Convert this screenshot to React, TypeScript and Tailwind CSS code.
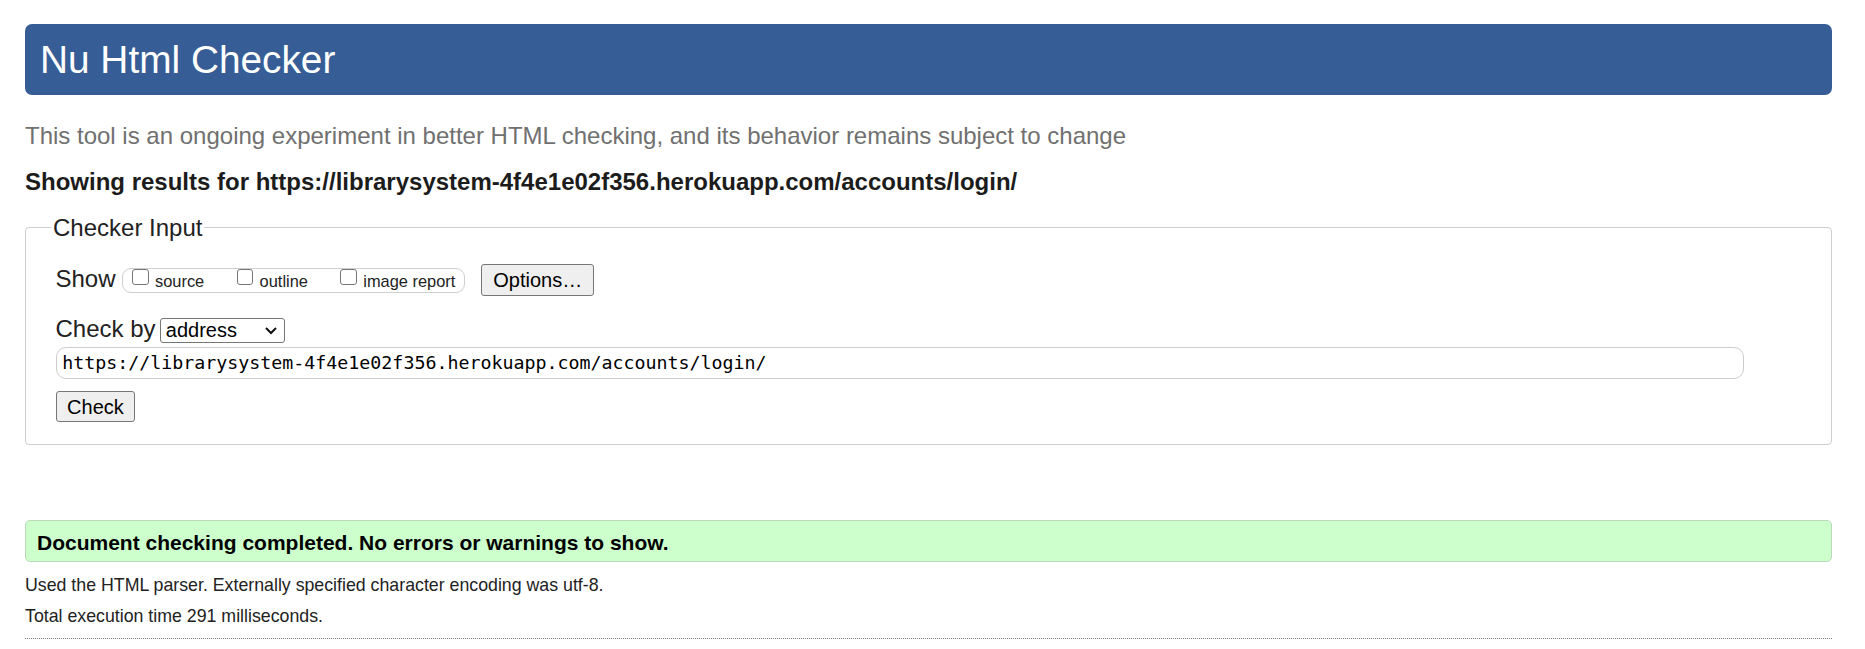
import { useState } from "react";

const targetUrl = "https://librarysystem-4f4e1e02f356.herokuapp.com/accounts/login/";

const showOptions = ["source", "outline", "image report"];

function Checkbox({ label }: { label: string }) {
  const [checked, setChecked] = useState(false);
  return (
    <label className="flex items-start">
      <input
        type="checkbox"
        checked={checked}
        onChange={() => setChecked(!checked)}
        className="appearance-none m-0 w-[16.7px] h-[16.7px] border border-[#767676] rounded-[3px] bg-white shrink-0"
      />
      <span className="ml-[6.2px] mt-[3.5px] text-[16.4px] leading-[19px] text-[#222]">{label}</span>
    </label>
  );
}

function NativeButton({ children }: { children: React.ReactNode }) {
  return (
    <button className="h-[32px] px-[11px] border border-[#767676] rounded-[3px] bg-[#efefef] text-[20px] leading-[22px] text-black">
      {children}
    </button>
  );
}

export default function App() {
  return (
    <div className="min-h-screen bg-white pt-[24px] pl-[25px] pr-[33px] text-[#222] font-['Liberation_Sans',Arial,sans-serif]">
      <h1 className="h-[71px] flex items-center pl-[15px] rounded-[7px] bg-[#365d95] text-white text-[38.8px] leading-[44px]">
        Nu Html Checker
      </h1>

      <p className="mt-[26.7px] text-[24px] leading-[28px] text-[#707070]">
        This tool is an ongoing experiment in better HTML checking, and its behavior remains subject to change
      </p>

      <p className="mt-[18px] text-[24px] leading-[28px] font-bold text-[#1c1c1c]">
        Showing results for {targetUrl}
      </p>

      <fieldset className="mt-[18px] border border-[#cfcfcf] rounded-[4px] pl-[24px] pr-[24px] pt-[22.7px] pb-[22px]">
        <legend className="px-[2px] ml-[1px] text-[24px] leading-[28px] text-[#222]">Checker Input</legend>

        <div className="pl-[5.5px]">
          <div className="flex items-center h-[32px]">
            <span className="text-[24px] leading-[28px] mb-[3px]">Show</span>
            <div className="ml-[6.6px] flex items-start h-[25.6px] border border-[#cfcfcf] rounded-[9px] pl-[9px] pr-[9px] gap-[32.5px]">
              {showOptions.map((o) => (
                <Checkbox key={o} label={o} />
              ))}
            </div>
            <div className="ml-[16px]">
              <NativeButton>Options…</NativeButton>
            </div>
          </div>

          <div className="mt-[19px] flex items-baseline">
            <span className="text-[24px] leading-[28px]">Check by</span>
            <div className="ml-[4px] w-[125.3px] h-[25px] border border-[#767676] rounded-[3px] bg-white pl-[5.3px] pr-[6.7px] flex items-baseline justify-between text-[20px] leading-[23px] text-black">
              <span>address</span>
              <svg width="12" height="8" viewBox="0 0 12 8" className="self-center" aria-hidden="true">
                <polyline points="1,1 6,6 11,1" fill="none" stroke="#111" strokeWidth="2" />
              </svg>
            </div>
          </div>

          <input
            readOnly
            value={targetUrl}
            className="mt-[3.6px] block w-[1688px] h-[32px] border border-[#cccccc] rounded-[10px] pl-[5.7px] text-[18.3px] text-black font-['DejaVu_Sans_Mono',monospace] outline-none"
          />

          <div className="mt-[12px]">
            <button className="h-[31.3px] px-[10.6px] border border-[#767676] rounded-[3px] bg-[#efefef] text-[20px] leading-[22px] text-black">
              Check
            </button>
          </div>
        </div>
      </fieldset>

      <div className="mt-[74.6px] border border-[#bcd8bc] rounded-[5px] bg-[#ccffcc] pl-[11px] pt-[10px] pb-[6.6px] text-[21px] leading-[24px] font-bold text-black">
        Document checking completed. No errors or warnings to show.
      </div>

      <p className="mt-[8px] text-[17.75px] leading-[30.6px] text-[#222]">
        Used the HTML parser. Externally specified character encoding was utf-8.
      </p>
      <p className="text-[17.75px] leading-[30.6px] text-[#222]">Total execution time 291 milliseconds.</p>

      <hr className="mt-[6.5px] border-0 border-t border-dotted border-[#7a7a7a]" />
    </div>
  );
}
